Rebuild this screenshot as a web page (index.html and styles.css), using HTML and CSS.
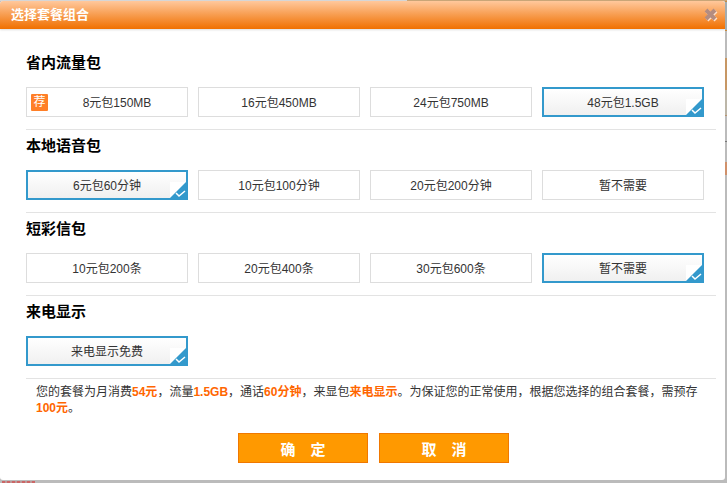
FILE: index.html
```html
<!DOCTYPE html>
<html lang="zh-CN">
<head>
<meta charset="utf-8">
<title>选择套餐组合</title>
<link rel="stylesheet" href="styles.css">
</head>
<body>
<form class="dialog" role="dialog" aria-labelledby="dialog-title">
  <header class="titlebar">
    <h1 id="dialog-title">选择套餐组合</h1>
    <button class="close" type="button" aria-label="关闭">
      <svg viewBox="0 0 16 16" width="16" height="16" aria-hidden="true">
        <path class="close-glow" d="M4 4l9 9M13 4l-9 9"/>
        <path class="close-mark" d="M3 3l9 9M12 3l-9 9"/>
      </svg>
    </button>
  </header>

  <main class="content">
    <section class="group">
      <h2 id="data-title">省内流量包</h2>
      <div class="options" role="radiogroup" aria-labelledby="data-title">
        <label class="option"><input type="radio" name="data"><i class="tag">荐</i><span>8元包150MB</span></label>
        <label class="option"><input type="radio" name="data"><span>16元包450MB</span></label>
        <label class="option"><input type="radio" name="data"><span>24元包750MB</span></label>
        <label class="option"><input type="radio" name="data" checked><span>48元包1.5GB</span><svg class="corner" viewBox="0 0 16 16" aria-hidden="true"><path class="corner-fill" d="M16 0v16H0z"/><path class="corner-tick" d="M6 11l3 3 6-5"/></svg></label>
      </div>
    </section>

    <section class="group">
      <h2 id="voice-title">本地语音包</h2>
      <div class="options" role="radiogroup" aria-labelledby="voice-title">
        <label class="option"><input type="radio" name="voice" checked><span>6元包60分钟</span><svg class="corner" viewBox="0 0 16 16" aria-hidden="true"><path class="corner-fill" d="M16 0v16H0z"/><path class="corner-tick" d="M6 11l3 3 6-5"/></svg></label>
        <label class="option"><input type="radio" name="voice"><span>10元包100分钟</span></label>
        <label class="option"><input type="radio" name="voice"><span>20元包200分钟</span></label>
        <label class="option"><input type="radio" name="voice"><span>暂不需要</span></label>
      </div>
    </section>

    <section class="group">
      <h2 id="sms-title">短彩信包</h2>
      <div class="options" role="radiogroup" aria-labelledby="sms-title">
        <label class="option"><input type="radio" name="sms"><span>10元包200条</span></label>
        <label class="option"><input type="radio" name="sms"><span>20元包400条</span></label>
        <label class="option"><input type="radio" name="sms"><span>30元包600条</span></label>
        <label class="option"><input type="radio" name="sms" checked><span>暂不需要</span><svg class="corner" viewBox="0 0 16 16" aria-hidden="true"><path class="corner-fill" d="M16 0v16H0z"/><path class="corner-tick" d="M6 11l3 3 6-5"/></svg></label>
      </div>
    </section>

    <section class="group">
      <h2 id="caller-title">来电显示</h2>
      <div class="options" role="radiogroup" aria-labelledby="caller-title">
        <label class="option"><input type="radio" name="caller" checked><span>来电显示免费</span><svg class="corner" viewBox="0 0 16 16" aria-hidden="true"><path class="corner-fill" d="M16 0v16H0z"/><path class="corner-tick" d="M6 11l3 3 6-5"/></svg></label>
      </div>
    </section>

    <p class="summary">您的套餐为月消费<strong>54元</strong>，流量<strong>1.5GB</strong>，通话<strong>60分钟</strong>，来显包<strong>来电显示</strong>。为保证您的正常使用，根据您选择的组合套餐，需预存<strong>100元</strong>。</p>

    <div class="actions">
      <button class="action" type="submit">确　定</button>
      <button class="action" type="button">取　消</button>
    </div>
  </main>
</form>
</body>
</html>
```

FILE: styles.css
```css
* {
  box-sizing: border-box;
}

body {
  margin: 0;
  padding: 1px 2px 3px 0;
  /* slivers of the dimmed page that show round the dialog */
  background:
    linear-gradient(#c9a577, #c9a577) 100% 0 / 44% 1px no-repeat,
    repeating-linear-gradient(90deg, #c66 0 3px, #b99 3px 5px) 2px 100% / 33px 2px no-repeat,
    linear-gradient(#c98a3c 2px, #a2acb0 2px 30px, #c98a3c 30px 31px, #bbb 31px 58px, #c79764 58px 90px, #bcb6a8 90px 115px, #b89470 115px 116px, #bbb 116px 141px, #777 141px 142px, #bbb 142px 162px, #d0906a 162px 175px, #bbb 175px) 100% 0 / 2px 100% no-repeat,
    linear-gradient(#d6d6d6 1px, #bbb 1px);
  color: #333;
  font: 12px/16px "Liberation Sans", "Noto Sans CJK SC", sans-serif;
}

h1,
h2,
p {
  margin: 0;
}

button {
  padding: 0;
  font-family: inherit;
  cursor: pointer;
}

.dialog {
  overflow: hidden;
  border-radius: 3px;
  background: #fff;
}

.titlebar {
  display: flex;
  align-items: center;
  justify-content: space-between;
  height: 28px;
  padding: 0 6px 0 11px;
  background: linear-gradient(#ffc89c, #f07000);
  box-shadow: 0 1px 2px #ddd;
}

.titlebar h1 {
  color: #fff;
  font-size: 13px;
}

.close {
  display: flex;
  border: 0;
  background: none;
}

.close path {
  fill: none;
}

.close-glow {
  stroke: #ffe0c8;
  stroke-width: 4;
}

.close-mark {
  stroke: #b48c80;
  stroke-width: 4;
}

.content {
  padding: 18px 9px 17px 26px;
}

.group {
  padding-bottom: 12px;
  border-bottom: 1px solid #e3e3e3;
}

.group h2 {
  margin-bottom: 9px;
  color: #000;
  font-size: 15px;
  line-height: 31px;
}

.options {
  display: grid;
  grid-template-columns: repeat(4, 1fr);
  gap: 10px;
  padding-right: 12px;
}

.option {
  display: flex;
  position: relative;
  align-items: center;
  justify-content: center;
  height: 30px;
  padding-top: 1px;
  border: 1px solid #ddd;
  cursor: pointer;
}

.option input {
  position: absolute;
  inset: 0;
  margin: 0;
  appearance: none;
  cursor: pointer;
}

.option:has(:checked) {
  border: 2px solid #39c;
  background: linear-gradient(#fff, #f0f0f0);
}

.tag {
  position: absolute;
  left: 4px;
  width: 17px;
  border-radius: 1px;
  background: #ff7f27;
  color: #fff;
  font-style: normal;
  line-height: 17px;
  text-align: center;
}

.option:has(.tag) {
  padding-left: 20px;
}

.corner {
  position: absolute;
  right: 0;
  bottom: 0;
  width: 16px;
  height: 16px;
  background: #fff;
}

.corner-fill {
  fill: #39c;
}

.corner-tick {
  fill: none;
  stroke: #fff;
  stroke-width: 1.5;
}

.summary {
  padding: 5px 0 0 10px;
}

.summary strong {
  color: #f60;
}

.actions {
  display: flex;
  justify-content: center;
  gap: 11px;
  margin-top: 17px;
  padding-left: 5px;
}

.action {
  width: 130px;
  height: 30px;
  border: 1px solid #f07800;
  background: #f90;
  color: #fff;
  font-size: 15px;
  font-weight: bold;
}
```
